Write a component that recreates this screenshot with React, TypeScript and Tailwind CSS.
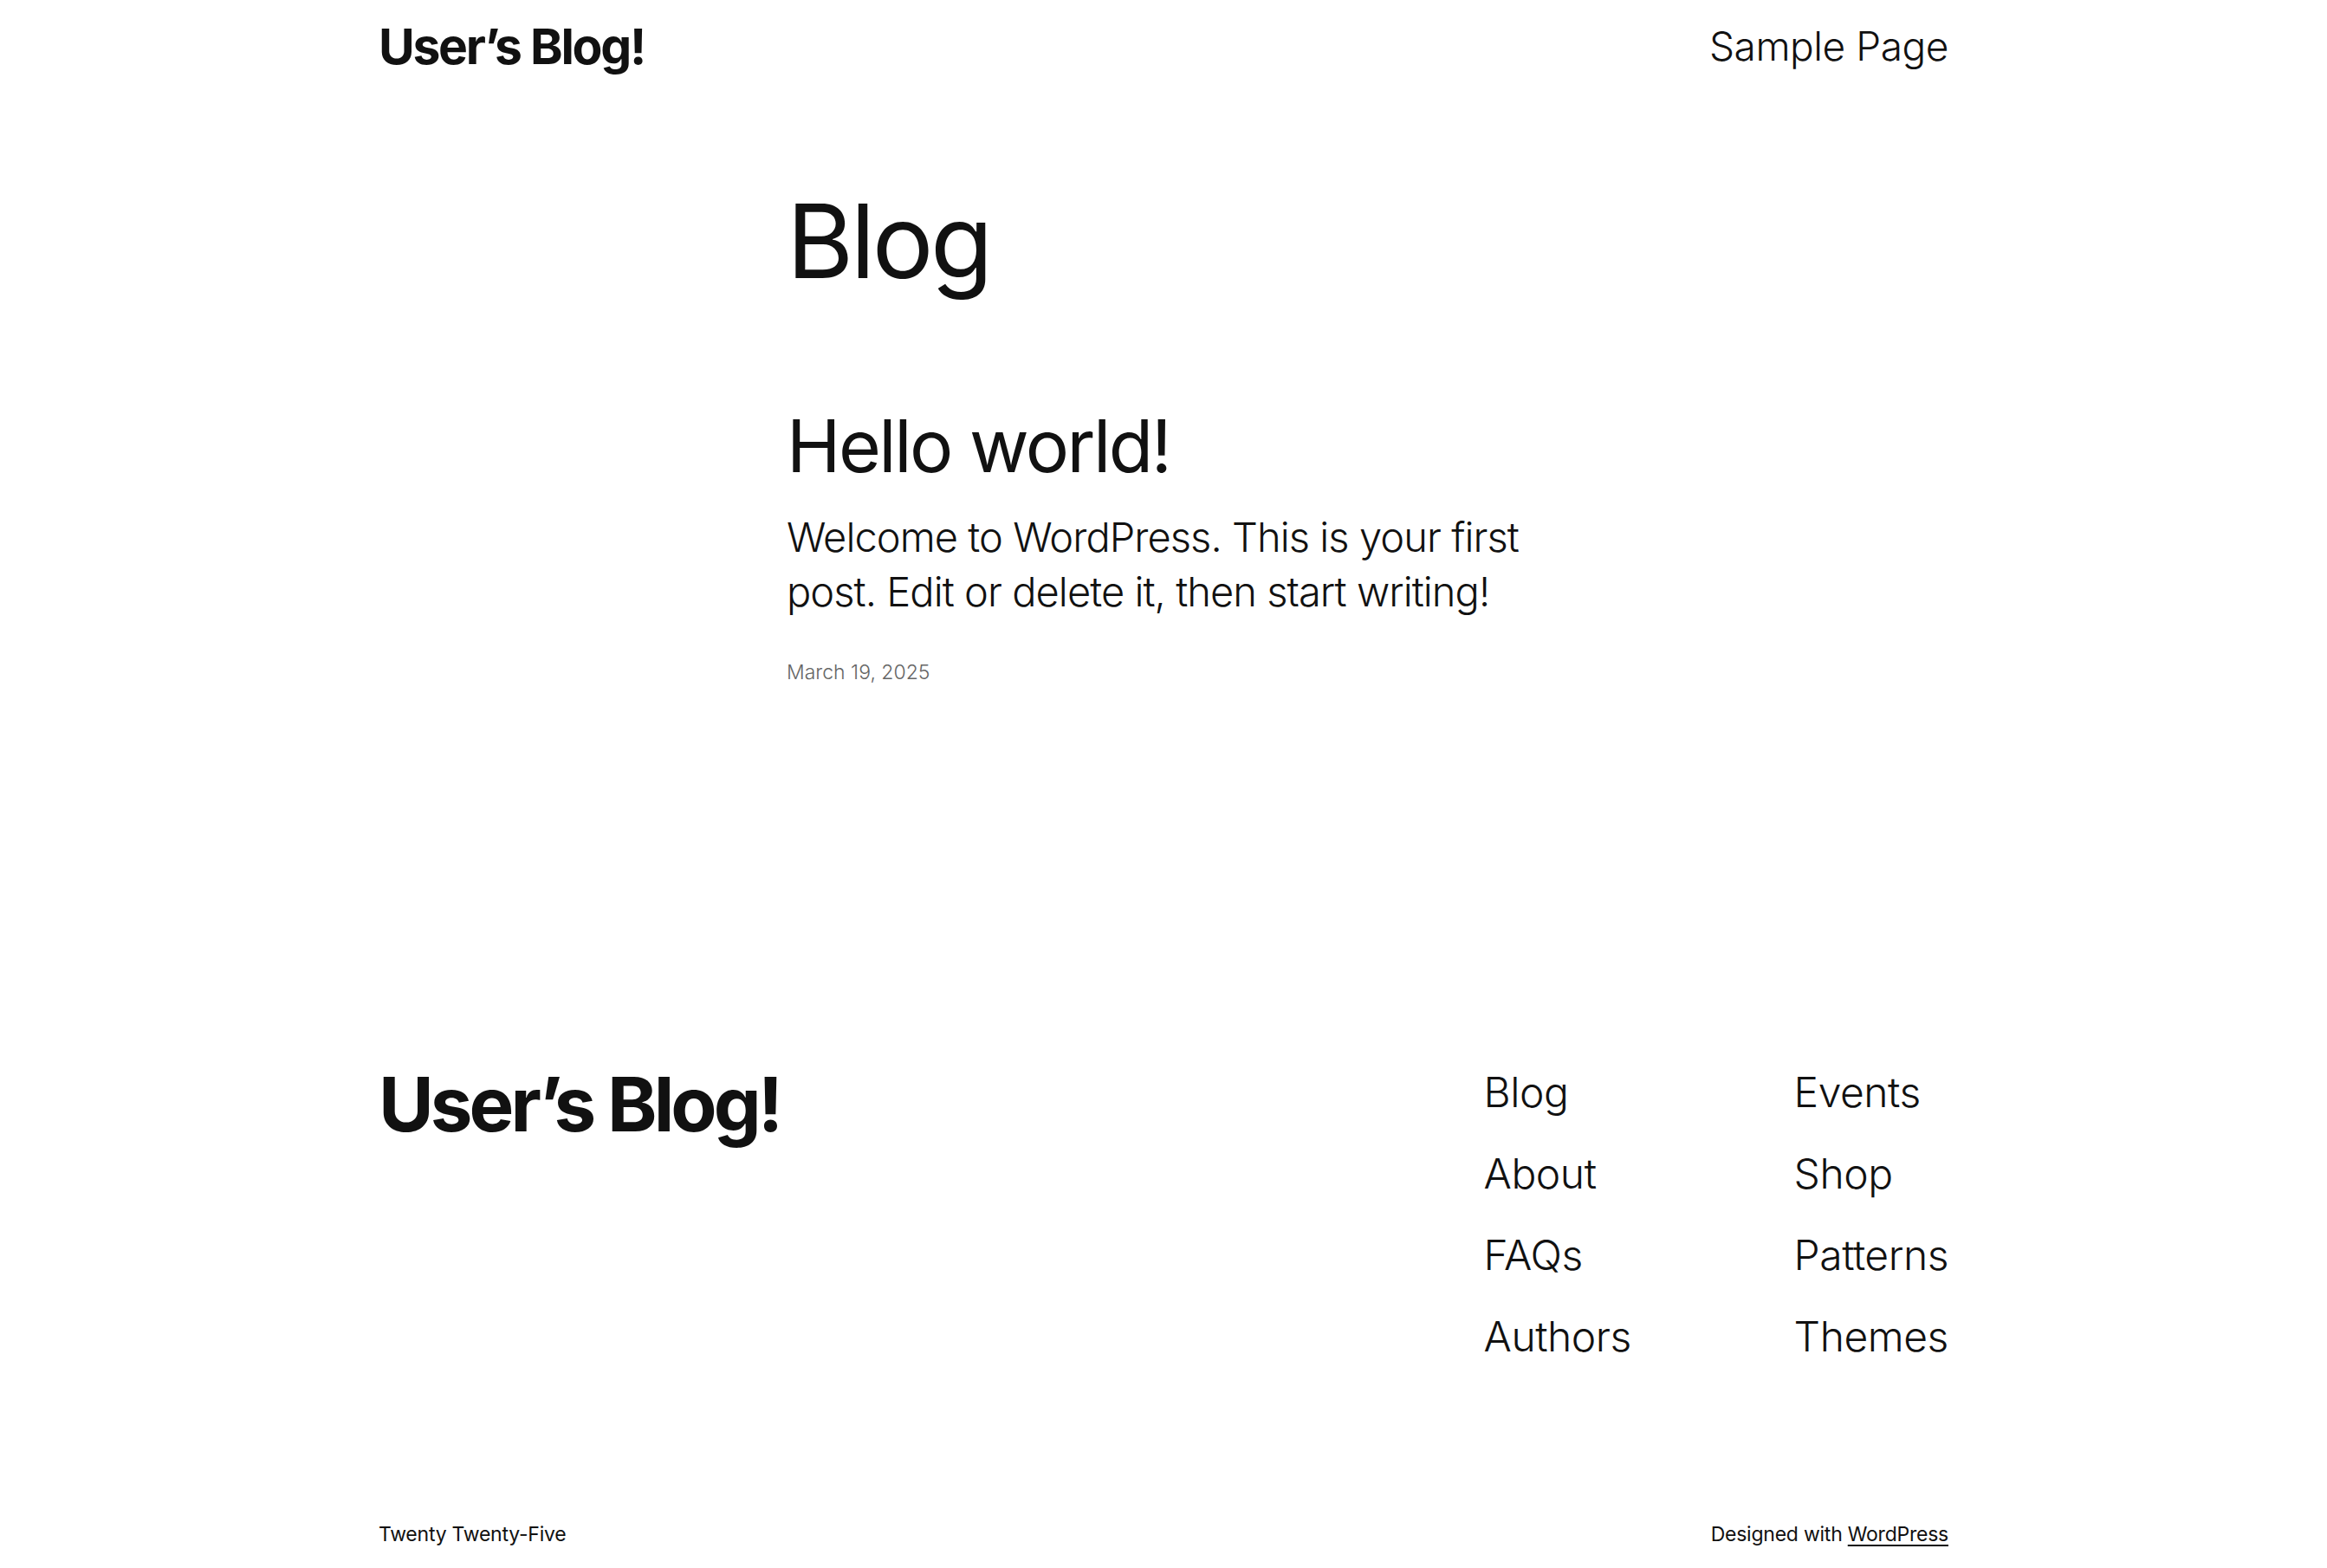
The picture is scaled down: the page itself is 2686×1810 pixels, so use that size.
import React from "react";

const footerLinks = [
  ["Blog", "About", "FAQs", "Authors"],
  ["Events", "Shop", "Patterns", "Themes"],
];

export default function App() {
  return (
    <div className="min-h-screen bg-white text-[#111111] font-['Inter','Noto_Sans',sans-serif]">
      <div className="mx-auto w-[1812px]">
        <header className="flex items-center justify-between pt-[25px]">
          <a href="#" className="text-[57px] font-bold leading-none tracking-[-0.04em]">
            User’s Blog!
          </a>
          <nav>
            <a href="#" className="-mt-[2px] block text-[46px] font-light leading-none tracking-[-0.01em]">
              Sample Page
            </a>
          </nav>
        </header>

        <main className="mx-auto w-[870px]">
          <h1 className="mt-[137px] text-[118px] font-normal leading-none tracking-[-0.03em]">Blog</h1>
          <article>
            <h2 className="mt-[136px] text-[84px] font-normal leading-none tracking-[-0.03em]">
              <a href="#">Hello world!</a>
            </h2>
            <p className="mt-[31px] text-[47px] font-light leading-[63px] tracking-[-0.02em]">
              Welcome to WordPress. This is your first post. Edit or delete it, then start writing!
            </p>
            <div className="mt-[51px] text-[23px] font-light leading-none text-[#666666]">March 19, 2025</div>
          </article>
        </main>

        <footer className="mt-[426px]">
          <div className="flex items-start justify-between">
            <a href="#" className="mt-[17px] text-[87px] font-bold leading-none tracking-[-0.045em]">
              User’s Blog!
            </a>
            <nav className="flex">
              {footerLinks.map((col, i) => (
                <ul key={i} className={i === 0 ? "w-[358px]" : ""}>
                  {col.map((label) => (
                    <li key={label} className="text-[48px] font-light leading-[94px] tracking-[-0.01em]">
                      <a href="#">{label}</a>
                    </li>
                  ))}
                </ul>
              ))}
            </nav>
          </div>
          <div className="mt-[170px] flex justify-between text-[23px] font-normal leading-none tracking-[-0.01em]">
            <span>Twenty Twenty-Five</span>
            <span>
              Designed with <a href="#" className="underline underline-offset-4">WordPress</a>
            </span>
          </div>
        </footer>
      </div>
    </div>
  );
}
